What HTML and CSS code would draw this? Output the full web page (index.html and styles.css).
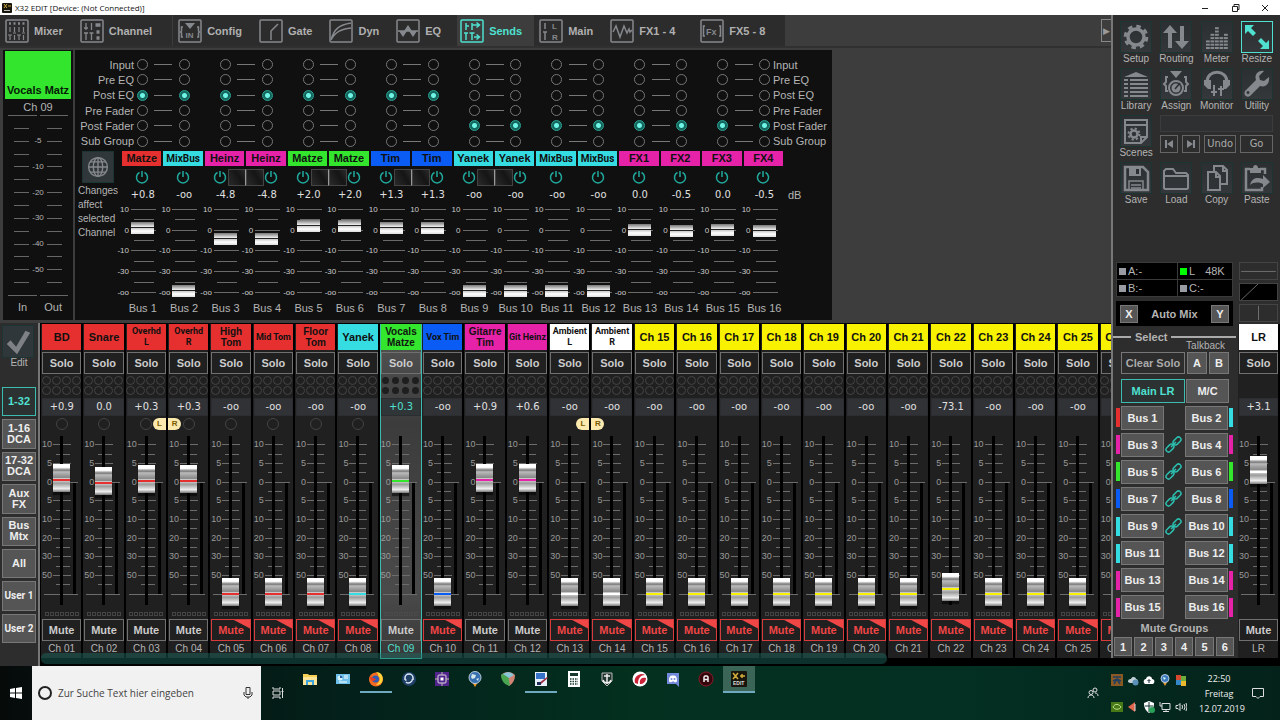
FILE: index.html
```html
<!DOCTYPE html>
<html lang="de">
<head>
  <meta charset="UTF-8">
  <meta name="viewport" content="width=device-width, initial-scale=1.0">
  <title>X32 EDIT</title>
  <link rel="stylesheet" href="styles.css">
</head>
<body>

  <header class="titlebar">
    <svg class="app-icon" viewBox="0 0 10 10"><rect width="10" height="10" rx="1" fill="#17150c"/><path d="M2 1l3 4M5 1L2 5M6 3h3" stroke="#c9a640"/><path d="M2 7.500h6" stroke="#bbb"/></svg>
    <span class="title">X32 EDIT [Device: (Not Connected)]</span>
    <button class="win-btn" aria-label="Minimize"><svg viewBox="0 0 10 10"><path d="M2 5.500h6"/></svg></button>
    <button class="win-btn" aria-label="Restore"><svg viewBox="0 0 10 10"><path d="M2.500 3.500h5v5h-5zM4 3.500v-2h5v5H7.500"/></svg></button>
    <button class="win-btn" aria-label="Close"><svg viewBox="0 0 10 10"><path d="M2 2l6 6M8 2l-6 6"/></svg></button>
  </header>

  <div class="app">
    <main class="main">
      <nav class="tabs" id="tabs"></nav>

      <section class="editor">
        <div class="channel-meter">
          <div class="channel-name">Vocals Matz</div>
          <div class="channel-id">Ch 09</div>
          <div class="meter-line"><i></i><i></i></div>
          <div class="meter-scale" id="meterScale"></div>
          <div class="meter-line"><i></i><i></i></div>
          <div class="meter-foot"><span>In</span><span>Out</span></div>
        </div>

        <div class="sends">
          <div class="routing">
            <div class="route-labels route-left">
              <span>Input</span><span>Pre EQ</span><span>Post EQ</span><span>Pre Fader</span><span>Post Fader</span><span>Sub Group</span>
            </div>
            <div class="route-pairs" id="routePairs"></div>
            <div class="route-labels route-right">
              <span>Input</span><span>Pre EQ</span><span>Post EQ</span><span>Pre Fader</span><span>Post Fader</span><span>Sub Group</span>
            </div>
          </div>
          <div class="send-levels">
            <div class="globe-col">
              <button class="tile" aria-label="Global"><svg viewBox="0 0 32 32" class="line-icon"><circle cx="16" cy="16" r="10"/><ellipse cx="16" cy="16" rx="5" ry="10"/><path d="M16 6v20M6 16h20M8 10.500h16M8 21.500h16"/></svg></button>
              <p>Changes<br>affect<br>selected<br>Channel</p>
            </div>
            <div class="buses" id="buses"></div>
            <div class="unit">dB</div>
          </div>
        </div>
      </section>

      <section class="mixer">
        <aside class="layers">
          <button class="tile" aria-label="Edit layer"><svg viewBox="0 0 32 32"><path d="M4 18l4-4 6 7L24 4l5 2-14 23z" fill="#7e8185"/></svg></button>
          <span class="edit-label">Edit</span>
          <div class="layer-list">
            <button class="active">1-32</button>
            <button>1-16<br>DCA</button>
            <button>17-32<br>DCA</button>
            <button>Aux<br>FX</button>
            <button>Bus<br>Mtx</button>
            <button>All</button>
            <button class="narrow">User 1</button>
            <button class="narrow">User 2</button>
          </div>
        </aside>
        <div class="strips-view">
          <div class="strips" id="strips"></div>
          <div class="scroll-thumb"></div>
        </div>
      </section>
    </main>

    <aside class="panel">
      <div class="tools" id="tools"></div>
      <div class="lower">
        <div class="select">
          <div class="status">
            <span><i></i>A:-</span><span><i class="on"></i>L <b>48K</b></span>
            <span><i></i>B:-</span><span><i></i>C:-</span>
          </div>
          <div class="automix"><button class="btn">X</button><span>Auto Mix</span><button class="btn">Y</button></div>
          <h2 class="select-title">Select</h2>
          <div class="talkback">Talkback</div>
          <div class="row solo-row"><button class="btn clear">Clear Solo</button><button class="btn">A</button><button class="btn">B</button></div>
          <div class="row main-row"><button class="btn main-lr">Main LR</button><button class="btn">M/C</button></div>
          <div class="bus-select" id="busSelect"></div>
          <div class="groups-title">Mute Groups</div>
          <div class="groups"><button class="btn">1</button><button class="btn">2</button><button class="btn">3</button><button class="btn">4</button><button class="btn">5</button><button class="btn">6</button></div>
        </div>
        <div class="master">
          <svg class="mini" viewBox="0 0 39 18"><path d="M0 9.500h39"/></svg>
          <svg class="mini mini-dark" viewBox="0 0 39 18"><path d="M0 18L19 0"/></svg>
          <svg class="mini" viewBox="0 0 39 18"><path d="M19.500 1v16"/></svg>
          <div id="masterStrip" class="master-strip"></div>
        </div>
      </div>
    </aside>
  </div>

  <footer class="taskbar">
    <button class="start" aria-label="Start"><svg viewBox="0 0 12 12"><path d="M0 2l5-1v4.500H0zM6 1l6-1v5.500H6zM0 6.500h5V11l-5-1zM6 6.500h6V12l-6-1z" fill="#fff"/></svg></button>
    <label class="search">
      <svg viewBox="0 0 16 16"><circle cx="8" cy="8" r="6" fill="none" stroke="#222" stroke-width="2"/></svg>
      <input type="text" placeholder="Zur Suche Text hier eingeben" aria-label="Suche">
      <svg viewBox="0 0 16 16" class="mic"><path d="M6 2.500h4v7H6zM4 7v3l2 2h4l2-2V7M8 12v2"/></svg>
    </label>
    <button class="taskview" aria-label="Taskansicht"><svg viewBox="0 0 12 12"><path d="M1 0v2h7V0M1 12v-2h7v2M1 4h7v4H1zM10.500 1v10M9.500 4.500h2"/></svg></button>
    <div class="apps" id="apps"></div>
    <div class="tray">
      <svg class="people" viewBox="0 0 12 12"><circle cx="8" cy="3" r="2"/><circle cx="4" cy="5.500" r="2"/><path d="M1 11c0-4 6-4 6 0M8 6c2 0 3 1 3 3"/></svg>
      <div class="tray-icons" id="tray"></div>
      <div class="clock">22:50<br>Freitag<br>12.07.2019</div>
      <svg class="note" viewBox="0 0 14 14"><path d="M1.500 2.500h11v8H9l-2 2-2-2H1.500z"/></svg>
    </div>
  </footer>

  <script src="script.js"></script>
</body>
</html>
```
FILE: styles.css
```css
* {
  box-sizing: border-box;
}

body {
  margin: 0;
  min-height: 100vh;
  display: flex;
  flex-direction: column;
  overflow: hidden;
  background: #000;
  color: #b4b4b4;
  font-family: "Liberation Sans", Arial, sans-serif;
  font-size: 11px;
  line-height: 14px;
}

button {
  font: inherit;
  color: inherit;
  background: none;
  border: 0;
  padding: 0;
  cursor: pointer;
}

svg {
  display: block;
  flex: none;
}

/* Window title */
.titlebar {
  display: flex;
  align-items: center;
  height: 15px;
  padding-left: 2px;
  background: #fff;
  color: #111;
}

.app-icon {
  width: 10px;
  height: 10px;
}

.title {
  flex: 1;
  margin-left: 3px;
  font: 8px/12px "Open Sans", sans-serif;
}

.win-btn {
  width: 30px;
  display: flex;
  justify-content: center;
}

.win-btn svg {
  width: 10px;
  height: 10px;
  fill: none;
  stroke: #222;
}

.app {
  flex: 1;
  display: flex;
  min-height: 0;
}

.main {
  flex: 1;
  min-width: 0;
  display: flex;
  flex-direction: column;
  background: #3d3d3d;
}

/* Tabs */
.tabs {
  display: flex;
  height: 33px;
  border-bottom: 2px solid #303030;
}

.tab {
  display: flex;
  align-items: center;
  gap: 5px;
  padding: 0 12px 0 5px;
  background: #2c2c2c;
  color: #b0b0b0;
  font-weight: bold;
}

.tab-end {
  padding-right: 20px;
}

.tab-line {
  border-right: 1px solid #3c3c3c;
}

.tab-wide {
  padding-right: 16px;
}

.tab.active {
  padding-left: 3px;
  background: #3d3d3d;
  color: #4fe0d0;
}

.tab svg {
  width: 24px;
  height: 24px;
  fill: none;
  stroke: #85888c;
  stroke-width: 1.5;
}

.tab svg text {
  stroke: none;
  fill: #85888c;
  font-weight: bold;
}

.tab.active svg {
  stroke: #4fe0d0;
}

.tab-scroll {
  align-self: center;
  width: 10px;
  height: 23px;
  margin-left: auto;
  border: 1px solid #888;
  border-right: 0;
  color: #999;
  font-size: 9px;
}

/* Channel meter */
.editor {
  display: flex;
  gap: 2px;
  padding: 2px 3px 3px;
}

.channel-meter {
  width: 70px;
  height: 270px;
  padding: 1px 2px;
  background: #101010;
  display: flex;
  flex-direction: column;
}

.channel-name {
  height: 48px;
  display: flex;
  align-items: flex-end;
  justify-content: center;
  padding-bottom: 2px;
  background: #33e62d;
  color: #061a06;
  font-weight: bold;
  white-space: nowrap;
}

.channel-id {
  padding: 1px 0;
  text-align: center;
}

.meter-line {
  display: flex;
  gap: 3px;
  padding: 0 3px;
}

.meter-line i {
  flex: 1;
  height: 1px;
  background: #666;
}

.meter-scale {
  flex: 1;
  display: grid;
  grid-auto-rows: 1fr;
  padding: 6px 9px;
}

.meter-scale div {
  display: grid;
  grid-template-columns: 15px 1fr 15px;
  align-items: center;
  text-align: center;
  font-size: 8px;
  line-height: 8px;
}

.meter-scale i {
  height: 1px;
  background: #666;
}

.meter-foot {
  display: flex;
  justify-content: space-between;
  padding: 4px 9px 5px 13px;
}

/* Sends */
.sends {
  width: 757px;
  padding-top: 7px;
  background: #101010;
}

.routing {
  display: flex;
  height: 92px;
}

.route-labels {
  width: 59px;
  display: grid;
  align-items: center;
  white-space: nowrap;
}

.route-left {
  margin-right: -12px;
  text-align: right;
}

.route-right {
  margin-left: -12px;
}

.route-pairs {
  flex: 1;
  display: grid;
  grid-template-columns: repeat(8, 1fr);
}

.route-pair {
  display: flex;
  align-items: center;
  justify-content: space-between;
  padding: 0 15px;
}

.route-pair i {
  width: 18px;
  height: 1px;
  background: #777;
}

.route-pair input {
  appearance: none;
  width: 11px;
  height: 11px;
  margin: 0;
  border: 1px solid #777;
  border-radius: 50%;
}

.route-pair input:checked {
  border-color: #2aa396;
  background: radial-gradient(circle, #6ff5e6 0 2px, #14655c 3px);
}

.send-levels {
  display: flex;
  padding-top: 2px;
}

.tile {
  width: 32px;
  height: 32px;
  border: 1px solid #1c3533;
  background: linear-gradient(#2b2f31, #34383a);
}

.tile svg {
  width: 30px;
  height: 30px;
}

.globe-col .tile,
.layers .tile {
  background: #30373b;
}

.line-icon {
  fill: none;
  stroke: #85888c;
  stroke-width: 1.5;
}

.globe-col {
  width: 47px;
  padding-left: 3px;
  font-size: 10px;
}

.globe-col .tile {
  display: block;
  margin-left: 4px;
}

.globe-col p {
  margin: 1px 0 0;
  line-height: 14px;
}

.buses {
  flex: 1;
  display: grid;
  grid-template-columns: repeat(16, 1fr);
}

.unit {
  width: 47px;
  padding: 37px 0 0 3px;
}

.bus-name {
  height: 15px;
  margin-right: 2px;
  text-align: center;
  line-height: 15px;
  font-weight: bold;
  color: #111;
  overflow: hidden;
}

.narrow {
  font-family: "Liberation Sans Narrow", Roboto, sans-serif;
}

.bus-name.narrow {
  font-size: 10px;
}

.bus-power {
  display: flex;
  justify-content: center;
  align-items: center;
  gap: 1px;
  height: 22px;
  padding-right: 2px;
}

.bus-power button svg {
  width: 14px;
  height: 14px;
  fill: none;
  stroke: #20a99c;
  stroke-width: 1.5;
}

.bus-power.first {
  justify-content: flex-end;
  padding-right: 0;
}

.bus-power.second {
  flex-direction: row-reverse;
  justify-content: flex-end;
  gap: 0;
  padding-right: 0;
}

.pan {
  width: 18px;
  height: 17px;
  border: 1px solid #444;
  background: linear-gradient(60deg, #2a2a2a, #151515 60%, #2a2a2a);
}

.first .pan {
  border-right-color: #999;
}

.value {
  font-family: "DejaVu Sans Condensed", "DejaVu Sans", sans-serif;
  text-align: center;
  color: #e0e0e0;
}

.send-scale {
  position: relative;
  height: 94px;
  margin-top: 2px;
  display: grid;
  grid-template-rows: repeat(9, minmax(0, 1fr));
}

.send-scale > div {
  display: flex;
  align-items: center;
}

.send-scale span {
  width: 7px;
  display: flex;
  justify-content: flex-end;
  font-size: 8px;
  line-height: 9px;
  white-space: nowrap;
  color: #ccc;
}

.send-scale i {
  width: 20px;
  height: 1px;
  margin-left: 12px;
  background: #6a6a6a;
}

.send-scale span:empty + i {
  margin-left: 5px;
}

.send-scale .major i {
  width: 25px;
  margin-left: 2px;
}

.send-cap {
  position: absolute;
  left: 9px;
  width: 23px;
  height: 12px;
  transform: translateY(-50%);
  background: linear-gradient(#777, #eee 40%, #222 42%, #222 50%, #ccc 52%, #fff 75%, #ddd);
}

.bus-label {
  padding-top: 3px;
  text-align: center;
  white-space: nowrap;
}

/* Mixer */
.mixer {
  flex: 1;
  display: flex;
  min-height: 0;
}

.layers {
  width: 40px;
  display: flex;
  flex-direction: column;
  align-items: flex-start;
  padding: 2px 3px 23px 2px;
  border-right: 2px solid #777;
  background: #2d2d2d;
}

.layers .tile {
  height: 33px;
}

.edit-label {
  width: 34px;
  font-size: 10px;
  line-height: 10px;
  text-align: center;
}

.layer-list {
  flex: 1;
  width: 34px;
  display: flex;
  flex-direction: column;
  gap: 3px;
  margin-top: 19px;
}

.layer-list button,
.btn {
  border: 1px solid #777;
  background: #555;
  color: #eee;
  font-weight: bold;
}

.layer-list button {
  flex: 1;
  line-height: 11px;
}

.layer-list .narrow {
  font-size: 10px;
}

.layer-list .active {
  background: #2c3131;
  border-color: #3bbcae;
  color: #4fe0d0;
}

.strips-view {
  position: relative;
  flex: 1;
  min-width: 0;
  padding: 1px 0 8px 1px;
  overflow: hidden;
  background: #000;
}

.strips {
  width: calc(100% + 31px);
  height: 100%;
  display: grid;
  grid-template-columns: repeat(26, 1fr);
}

.scroll-thumb {
  position: absolute;
  left: 1px;
  bottom: 2px;
  width: 79%;
  height: 11px;
  border-radius: 5px;
  background: rgba(28, 110, 102, .45);
}

.strip {
  min-width: 0;
  display: flex;
  flex-direction: column;
  padding-left: 1px;
  border-right: 2px solid #000;
  background: #202020;
}

.strip.selected {
  margin-bottom: -1px;
  padding: 0;
  border: 1px solid #3bbcae;
  border-top: 0;
  background: linear-gradient(#555, #3c3c3c 30%, #4a4a4a 80%, #383838);
}

.strip-name {
  height: 26px;
  display: flex;
  align-items: center;
  justify-content: center;
  text-align: center;
  color: #111;
  font-weight: bold;
  line-height: 11px;
  white-space: nowrap;
}

.strip-name.two {
  font-size: 10px;
}

.strip-name.narrow {
  font-size: 9px;
}

.box-btn {
  height: 22px;
  border: 1px solid #707070;
  color: #ccc;
  font-weight: bold;
}

.solo {
  margin-top: 2px;
}

.strip .dots {
  height: 24px;
  display: grid;
  grid-template-columns: repeat(4, 10px);
  grid-auto-rows: 10px;
  align-content: center;
  justify-content: center;
}

.dots i {
  width: 9px;
  height: 9px;
  border: 1px solid #444;
  border-radius: 50%;
}

.selected .dots i {
  width: 7px;
  height: 7px;
  margin: 1px;
  border: 0;
  background: #1e1e1e;
}

.strip .value {
  height: 18px;
  margin-bottom: 2px;
  line-height: 16px;
  border: 1px solid #2b2d30;
  background: #303236;
}

.strip.selected .value {
  color: #4fe0d0;
  background: #303638;
}

.pan-row {
  position: relative;
  height: 13px;
  display: flex;
  justify-content: center;
}

.knob {
  width: 12px;
  height: 12px;
  border: 1px solid #444;
  border-radius: 50%;
}

.link {
  position: absolute;
  top: 0;
  width: 13px;
  height: 12px;
  background: #fbe9ae;
  color: #7a5a00;
  font-size: 8px;
  line-height: 12px;
  font-weight: bold;
  text-align: center;
}

.link-l {
  right: 0;
  border-radius: 6px 0 0 6px;
}

.link-r {
  left: -1px;
  border-radius: 0 6px 6px 0;
}

.fader {
  flex: 1;
  position: relative;
  display: grid;
  grid-template-rows: repeat(17, minmax(0, 1fr));
  margin: 9px 0 13px 1px;
}

.tick {
  display: flex;
  align-items: center;
}

.tick span {
  width: 9px;
  display: flex;
  justify-content: flex-end;
  color: #999;
  font-size: 9px;
  line-height: 9px;
}

.tick i {
  width: 14px;
  height: 1px;
  margin-left: 13px;
  background: #6c6c6c;
}

.tick.major i {
  width: 18px;
  margin-left: 1px;
}

.tick.zero i {
  width: 25px;
}

.tick.end i {
  width: 34px;
  margin-left: 1px;
}

.groove,
.meter {
  position: absolute;
  background: #000;
}

.groove {
  left: 17px;
  top: -4px;
  bottom: -6px;
  width: 3px;
}

.meter {
  left: 30px;
  top: 27%;
  bottom: 3%;
  width: 3px;
}

.cap {
  position: absolute;
  left: 10px;
  width: 17px;
  height: 28px;
  margin-top: -16px;
  background: linear-gradient(#fff 0 12%, #aaa 18%, #777 22%, #bbb 28%, #888 48%, #ccc 52%, #bbb 64%, #999 68%, #eee 88%, #777);
  box-shadow: 0 3px 1px #0008;
}

.cap::after {
  content: "";
  position: absolute;
  left: 0;
  right: 0;
  top: 15px;
  height: 2px;
  background: currentColor;
}

.squares {
  height: 5px;
  display: flex;
  justify-content: center;
  gap: 1px;
  margin-bottom: 2px;
}

.squares i {
  width: 4px;
  height: 4px;
  border: 1px solid #444;
}

.selected .squares i {
  border-color: #4a4a4a;
}

.mute.on {
  border-color: #d83b3b;
  color: #f04646;
  background: linear-gradient(to bottom left, #f04646 7px, transparent 8px);
}

.strip-label {
  height: 17px;
  font-size: 10px;
  line-height: 16px;
  text-align: center;
  white-space: nowrap;
}

.selected .strip-label {
  color: #4fe0d0;
}

/* Right panel */
.panel {
  width: 169px;
  display: flex;
  flex-direction: column;
  margin-bottom: 8px;
  border-left: 2px solid #777;
  background: #2d2d2d;
}

.tools {
  display: grid;
  grid-template-columns: repeat(4, 1fr);
  grid-auto-rows: 47px;
  height: 247px;
  padding: 6px 3px 0 3px;
  align-content: start;
}

.tool {
  display: flex;
  flex-direction: column;
  align-items: center;
  color: #b4b4b4;
  font-size: 10px;
  line-height: 12px;
}

.tool.active .tile {
  border-color: #4fe0d0;
}

.scene-box {
  grid-column: span 3;
  display: grid;
  grid-template-columns: 18px 18px 1fr 33px;
  grid-template-rows: 17px 18px;
  gap: 3px 4px;
  padding: 0 4px;
}

.scene-box input {
  grid-column: 1 / -1;
  width: 100%;
  min-width: 0;
  border: 1px solid #3c3c3c;
  background: #2f3031;
}

.scene-box button {
  border: 1px solid #666;
  color: #aaa;
  font-family: "DejaVu Sans Condensed", "DejaVu Sans", sans-serif;
  display: flex;
  align-items: center;
  justify-content: center;
}

.scene-box svg {
  width: 10px;
  height: 10px;
  fill: #85888c;
}

.lower {
  flex: 1;
  display: flex;
}

.select {
  flex: 1;
  display: flex;
  flex-direction: column;
  padding: 0 5px 1px 3px;
}

.status {
  display: grid;
  grid-template-columns: 60px 1fr;
  gap: 1px;
  height: 35px;
  border: 1px solid #3a3a3a;
  background: #3a3a3a;
}

.status span {
  display: flex;
  align-items: center;
  gap: 2px;
  padding-left: 2px;
  background: #000;
}

.status i {
  width: 7px;
  height: 7px;
  background: #999ca3;
}

.status i.on {
  background: #0f0;
}

.status b {
  margin-left: 8px;
  font-weight: normal;
}

.automix {
  display: flex;
  align-items: center;
  justify-content: space-between;
  height: 25px;
  margin-top: 4px;
  padding: 0 4px;
  background: #000;
  font-weight: bold;
}

.automix .btn {
  width: 18px;
  height: 18px;
}

.select-title {
  display: flex;
  align-items: center;
  gap: 4px;
  margin: 4px -3px 0;
  font-size: 11px;
  line-height: 14px;
}

.select-title::before,
.select-title::after {
  content: "";
  height: 2px;
  background: #aaa;
}

.select-title::before {
  width: 18px;
}

.select-title::after {
  flex: 1;
}

.talkback {
  margin: -4px 8px 0 0;
  text-align: right;
  font-size: 10px;
  line-height: 12px;
}

.row {
  display: grid;
  padding: 0 4px 0 5px;
}

.row .btn {
  padding: 0;
  white-space: nowrap;
}

.solo-row {
  grid-template-columns: 1fr 20px 20px;
  gap: 2px;
  height: 22px;
}

.main-row {
  grid-template-columns: 1fr 43px;
  gap: 1px;
  height: 24px;
  margin-top: 5px;
}

.btn.clear {
  background: #2d2d2d;
  color: #aaa;
}

.btn.main-lr {
  border-color: #3bbcae;
  background: #2c3131;
  color: #4fe0d0;
}

.bus-select {
  flex: 1;
  display: grid;
  grid-auto-rows: 1fr;
  margin-top: 1px;
}

.bus-row {
  display: grid;
  grid-template-columns: 4px 43px 1fr 43px 4px;
  align-items: center;
  column-gap: 1px;
}

.bus-row > i {
  height: 19px;
}

.bus-row .btn {
  height: 24px;
  padding: 0;
  white-space: nowrap;
}

.bus-row svg {
  width: 17px;
  height: 17px;
  fill: none;
  stroke: #2bbdae;
  stroke-width: 1.5;
}

.groups-title {
  text-align: center;
  font-weight: bold;
  line-height: 14px;
}

.groups {
  display: grid;
  grid-template-columns: repeat(6, 1fr);
  gap: 2px;
  margin: 2px -1px 1px -2px;
}

.groups .btn {
  height: 19px;
}

.master {
  width: 42px;
  display: flex;
  flex-direction: column;
}

.mini {
  width: 39px;
  height: 18px;
  margin: 0 0 3px 1px;
  border: 1px solid #444;
  stroke: #777;
}

.mini:nth-of-type(3) {
  margin-bottom: 2px;
}

.mini-dark {
  background: #000;
}

.master-strip {
  flex: 1;
  display: grid;
}

/* Taskbar */
.taskbar {
  display: flex;
  height: 54px;
  background: linear-gradient(90deg, #060b0a, #03211a 28%, #03301f 50%, #033022 75%, #04221a);
  color: #eee;
}

.start {
  width: 32px;
  display: flex;
  align-items: center;
  justify-content: center;
}

.start svg {
  width: 12px;
  height: 12px;
}

.search {
  width: 229px;
  display: flex;
  align-items: center;
  padding: 0 5px;
  background: #f1f1f1;
}

.search svg {
  width: 16px;
  height: 16px;
}

.search .mic {
  fill: none;
  stroke: #333;
}

.search input {
  flex: 1;
  min-width: 0;
  border: 0;
  padding: 0 5px;
  background: none;
  font: 10px/14px "Open Sans", sans-serif;
}

.search input::placeholder {
  color: #444;
}

.taskview {
  width: 33px;
  display: flex;
  align-items: center;
  justify-content: center;
}

.taskview svg,
.people,
.note {
  width: 12px;
  height: 12px;
  fill: none;
  stroke: #ddd;
}

.apps {
  display: flex;
  gap: 1px;
}

.app-btn {
  width: 32px;
  height: 27px;
  display: flex;
  align-items: center;
  justify-content: center;
  border-bottom: 2px solid transparent;
}

.app-btn svg {
  width: 16px;
  height: 16px;
}

.app-btn.running {
  border-color: #6fa9c0;
}

.app-btn.current {
  background: #3b6557;
}

.tray {
  margin-left: auto;
  display: flex;
  align-items: center;
  gap: 12px;
  padding-right: 15px;
}

.tray-icons {
  display: grid;
  grid-template-columns: repeat(5, 12px);
  gap: 15px 4px;
}

.tray-icons svg {
  width: 12px;
  height: 12px;
}

.clock {
  width: 40px;
  display: flex;
  flex-direction: column;
  text-align: center;
  font: 9px/15px "Open Sans", sans-serif;
}

.note {
  width: 14px;
  height: 14px;
}
```
FILE: script.js
```js
const RED = '#e5302f', CYAN = '#35dce2', PINK = '#e622a8', GREEN = '#33e62d', BLUE = '#0a5cf5', WHITE = '#ffffff', YELLOW = '#f8f200';

const fill = (id, html) => { document.getElementById(id).innerHTML = html; };
const frame = '<rect x="1" y="1" width="22" height="22" rx="1"/>';

// tabs: label, icon, extra classes
const tabs = [
  ['Mixer', '<path d="M5 8v5M9.500 8v5M14 8v5M18.500 8v5M5 16v5M9.500 16v5M14 16v5M18.500 16v5M3 16h4M8 14h3M12 16h4M17 14h3" stroke-width="1.200"/><path d="M4 4.500h2M8.500 4.500h2M13 4.500h2M17.500 4.500h2" stroke-width="2.500"/>', ''],
  ['Channel', '<path d="M6 4v7M11.500 4v7M4 14h4M6 14v7M9.500 14h4M11.500 14v7M4 9h4" stroke-width="1.300"/><path d="M15.500 6h5M16.500 13h3M16.500 19h3" stroke-width="3.500"/>', 'tab-end tab-line'],
  ['Config', '<path d="M7 4h10l-5 6z" fill="#85888c" stroke="none"/><path d="M5 8H3.500v4l-1 1 1 1v4H5M19 8h1.500v4l1 1-1 1v4H19"/><text x="7.500" y="19" font-size="8">IN</text>', ''],
  ['Gate', '<path d="M12 21v-9l7-7"/>', ''],
  ['Dyn', '<path d="M2 21C5 10 10 6 22 4M2 21C6 13 12 10 22 9"/>', ''],
  ['EQ', '<path d="M2 12h20"/><path d="M3 12h5l4-6 4 6h5l-4 6-4-6h-2l-4 6z" fill="#85888c" stroke="none"/>', 'tab-wide'],
  ['Sends', '<path d="M6 4v7M6 7h3M12 4v7M12 6h7M16.500 3.500L19.500 6l-3 2.500M4 14h4M6 14v7M9.500 14h5M12 14v7M14 18h5M16.500 15.500l3 2.500-3 2.500"/>', 'active'],
  ['Main', '<path d="M6 4v6M4 13h4M6 13v8"/><text x="13" y="10" font-size="8">L</text><text x="13" y="21" font-size="8">R</text>', ''],
  ['FX1 - 4', '<path d="M3 13l3-6 4 11 4-11 3 7 2-4 1 3 2-2"/>', 'tab-end'],
  ['FX5 - 8', '<path d="M5 7H3.500v10H5M19 7h1.500v10H19"/><text x="6" y="15.500" font-size="9">Fx</text>', 'tab-end']
];
fill('tabs', tabs.map(([name, icon, cls]) =>
  `<button class="tab ${cls}"><svg viewBox="0 0 24 24">${frame}${icon}</svg>${name}</button>`).join('') +
  '<button class="tab-scroll" aria-label="Scroll tabs">&#9654;</button>');

// input meter scale
fill('meterScale', ['', '-5', '', '-10', '', '-20', '', '-30', '', '-40', '', '-50', '']
  .map(v => `<div><i></i><span>${v}</span><i></i></div>`).join(''));

// send buses: name, colour, value, fader position in %
const buses = [
  ['Matze', RED, '+0.8', 26], ['MixBus', CYAN, '-oo', 93], ['Heinz', PINK, '-4.8', 37], ['Heinz', PINK, '-4.8', 37],
  ['Matze', GREEN, '+2.0', 23], ['Matze', GREEN, '+2.0', 23], ['Tim', BLUE, '+1.3', 25], ['Tim', BLUE, '+1.3', 25],
  ['Yanek', CYAN, '-oo', 93], ['Yanek', CYAN, '-oo', 93], ['MixBus', CYAN, '-oo', 93], ['MixBus', CYAN, '-oo', 93],
  ['FX1', PINK, '0.0', 28], ['FX2', PINK, '-0.5', 29], ['FX3', PINK, '0.0', 28], ['FX4', PINK, '-0.5', 29]
];
const taps = ['Input', 'Pre EQ', 'Post EQ', 'Pre Fader', 'Post Fader', 'Sub Group'];

fill('routePairs', taps.map((tap, r) => [0, 2, 4, 6, 8, 10, 12, 14].map(b => {
  const radio = n => `<input type="radio" name="bus${n + 1}" aria-label="Bus ${n + 1} ${tap}"${r === (n < 8 ? 2 : 4) ? ' checked' : ''}>`;
  return `<div class="route-pair">${radio(b)}<i></i>${radio(b + 1)}</div>`;
}).join('')).join(''));

const sendScale = ['10', '', '0', '', '-10', '', '-30', '', '-oo']
  .map(v => `<div class="${v ? 'major' : ''}"><span>${v}</span><i></i></div>`).join('');
const linkedBuses = [2, 3, 4, 5, 6, 7, 8, 9];

fill('buses', buses.map(([name, color, value, pos], i) => {
  const linked = linkedBuses.includes(i);
  const side = linked ? (i % 2 ? 'second' : 'first') : '';
  return `<div class="bus">
    <div class="bus-name ${name === 'MixBus' ? 'narrow' : ''}" style="background:${color}">${name}</div>
    <div class="bus-power ${side}">
      <button aria-label="Bus ${i + 1} on"><svg viewBox="0 0 14 14"><path d="M4.500 2.500a5.500 5.500 0 1 0 5 0M7 1v6"/></svg></button>
      ${linked ? '<div class="pan"></div>' : ''}
    </div>
    <div class="value">${value}</div>
    <div class="send-scale">${sendScale}<div class="send-cap" style="top:${pos}%"></div></div>
    <div class="bus-label">Bus ${i + 1}</div>
  </div>`;
}).join(''));

// channel strips: name, colour, value, fader position in %, muted, link badge
const channels = [
  ['BD', RED, '+0.9', 25], ['Snare', RED, '0.0', 27], ['Overhd<br>L', RED, '+0.3', 26, 0, 'L'], ['Overhd<br>R', RED, '+0.3', 26, 0, 'R'],
  ['High<br>Tom', RED, '-oo', 97, 1], ['Mid Tom', RED, '-oo', 97, 1], ['Floor<br>Tom', RED, '-oo', 97, 1], ['Yanek', CYAN, '-oo', 97, 1],
  ['Vocals<br>Matze', GREEN, '+0.3', 26], ['Vox Tim', BLUE, '-oo', 97, 1], ['Gitarre<br>Tim', PINK, '+0.9', 25], ['Git Heinz', PINK, '+0.6', 25],
  ['Ambient<br>L', WHITE, '-oo', 97, 1, 'L'], ['Ambient<br>R', WHITE, '-oo', 97, 1, 'R']
];
for (let n = 15; n <= 26; n++) {
  channels.push(['Ch ' + n, YELLOW, n === 22 ? '-73.1' : '-oo', n === 22 ? 94 : 97, 1]);
}
const narrowNames = ['Mid Tom', 'Vox Tim', 'Git Heinz', 'Ambient<br>L', 'Ambient<br>R', 'Overhd<br>L', 'Overhd<br>R'];
const faderScale = ['10', '', '5', '', '0', '', '5', '', '10', '', '20', '', '30', '', '50', '', 'end'].map((v, i) => {
  const cls = v === 'end' ? 'end' : (v ? 'major' : '') + (i === 4 ? ' zero' : '');
  return `<div class="tick ${cls}">${v && v !== 'end' ? `<span>${v}</span>` : ''}<i></i></div>`;
}).join('');

function strip(ch, label, i, master) {
  const [name, color, value, pos, muted, link] = ch;
  const cls = (name.includes('<br>') ? 'two ' : '') + (narrowNames.includes(name) ? 'narrow' : '');
  return `<div class="strip ${i === 8 ? 'selected' : ''}">
    <div class="strip-name ${cls}" style="background:${color}"><span>${name}</span></div>
    <button class="box-btn solo">Solo</button>
    <div class="dots">${master ? '' : '<i></i>'.repeat(8)}</div>
    <div class="value">${value}</div>
    <div class="pan-row">${i < 8 ? '<div class="knob"></div>' : ''}${link ? `<span class="link link-${link.toLowerCase()}">${link}</span>` : ''}</div>
    <div class="fader">${faderScale}<div class="groove"></div><div class="meter"></div><div class="cap" style="top:${pos}%;color:${color}"></div></div>
    <div class="squares">${master ? '' : '<i></i>'.repeat(7)}</div>
    <button class="box-btn mute ${muted ? 'on' : ''}">Mute</button>
    <div class="strip-label">${label}</div>
  </div>`;
}
fill('strips', channels.map((ch, i) => strip(ch, 'Ch ' + String(i + 1).padStart(2, '0'), i)).join(''));
fill('masterStrip', strip(['LR', WHITE, '+3.1', 20], 'LR', 99, true));

// toolbox
const G = '#85888c';
const bars = [[5, 2], [9.5, 4], [14, 6], [18.5, 3], [23, 4]]
  .map(([x, n]) => Array.from({ length: n + 1 }, (_, k) => `<rect x="${x}" y="${26 - k * 3.3}" width="3.800" height="2"/>`).join('')).join('');
const tools = [
  ['Setup', `<circle cx="16" cy="16" r="8" fill="none" stroke="${G}" stroke-width="3.500"/><circle cx="16" cy="16" r="10.800" fill="none" stroke="${G}" stroke-width="3" stroke-dasharray="4.500 3.980"/>`],
  ['Routing', '<path d="M10 4l7 8h-5v15H8V12H3zM22 28l-7-8h5V5h4v15h5z"/>'],
  ['Meter', bars],
  ['Resize', '<path d="M4 4h9l-3 3 5 5-3 3-5-5-3 3zM28 28h-9l3-3-5-5 3-3 5 5 3-3z" fill="#4fe0d0"/>'],
  ['Library', '<path d="M16 4l12 5H4zM4 11h4v2H4zM10 11h18v2H10zM4 15h4v2H4zM10 15h18v2H10zM4 19h4v2H4zM10 19h18v2H10zM4 23h4v2H4zM10 23h18v2H10zM4 27h4v2H4zM10 27h18v2H10z"/>'],
  ['Assign', `<path d="M10 3h12l-6 7z"/><g fill="none" stroke="${G}" stroke-width="2"><path d="M8 9H6v5l-2 2 2 2v5h2M24 9h2v5l2 2-2 2v5h-2"/><circle cx="16" cy="20" r="7"/></g><circle cx="16" cy="20" r="4.500"/><path d="M15 21l5-6" stroke="#2b2f31" stroke-width="1.500"/>`],
  ['Monitor', `<path d="M6 14C6 1 26 1 26 14" fill="none" stroke="${G}" stroke-width="3"/><path d="M3 12h7v9H7l-4-4zM22 12h7v5l-4 4h-3z"/><path d="M13 17v6M13 25v3M10 24h6M20 18v2M20 22v6M17 21h6" stroke="${G}" stroke-width="2"/>`],
  ['Utility', '<path d="M28 9l-5 4-4-1-1-4 5-5c-6-1-10 4-8 9L4 23c-2 4 2 7 5 5l10-10c6 2 10-3 9-9zM7 26a1.500 1.500 0 1 1 0-3 1.500 1.500 0 0 1 0 3z" fill-rule="evenodd"/>'],
  ['Scenes', `<g fill="none" stroke="${G}" stroke-width="2"><path d="M5 5h22v17l-6 6H5zM5 10h22M21 28v-6h6"/><circle cx="14" cy="19" r="3.500" stroke-width="2.500"/></g><circle cx="14" cy="19" r="5.500" fill="none" stroke="${G}" stroke-width="2" stroke-dasharray="2.200 2.120"/>`],
  null,
  ['Save', `<path d="M5 5h18l5 5v18H5z" fill="none" stroke="${G}" stroke-width="2.500"/><path d="M9 5h12v9H9z"/><path d="M16 7h3v5h-3z" fill="#2b2f31"/><path d="M9 28V19h14v9M11 23h10M11 26h10" fill="none" stroke="${G}" stroke-width="1.500"/>`],
  ['Load', `<path d="M4 26V9l2-2h7l3 4h10l2 2v13l-1 1H5zM4 14h24" fill="none" stroke="${G}" stroke-width="2"/>`],
  ['Copy', `<g stroke="${G}" stroke-width="2" fill="#2f3335"><path d="M13 4h9l4 4v14H13zM22 4v5h4"/><path d="M7 10h8l4 4v14H7zM15 10v5h4"/></g>`],
  ['Paste', `<path d="M9 7H5v21h16v-3M19 7h5v5" fill="none" stroke="${G}" stroke-width="2.500"/><path d="M9 6h3c0-4 5-4 5 0h3v5H9zM9 23c2-8 8-8 13-6v-4l7 7-7 6v-4c-5-2-9-2-13 1z"/>`]
];
fill('tools', tools.map(t => t ? `<button class="tool ${t[0] === 'Resize' ? 'active' : ''}"><span class="tile"><svg viewBox="1 1 30 30" fill="${G}">${t[1]}</svg></span>${t[0]}</button>` :
  `<div class="scene-box"><input type="text" aria-label="Scene">
    <button aria-label="Previous"><svg viewBox="0 0 10 10"><path d="M1 1h2v8H1zM9 1v8L3 5z"/></svg></button>
    <button aria-label="Next"><svg viewBox="0 0 10 10"><path d="M7 1h2v8H7zM1 1v8l6-4z"/></svg></button>
    <button>Undo</button><button>Go</button></div>`).join(''));

// bus select buttons
const selectColors = [[RED, CYAN], [PINK, PINK], [GREEN, GREEN], [BLUE, BLUE], [CYAN, CYAN], [CYAN, CYAN], [PINK, PINK], [PINK, PINK]];
fill('busSelect', selectColors.map(([left, right], r) => `<div class="bus-row">
  <i style="background:${left}"></i><button class="btn">Bus ${r * 2 + 1}</button>
  <span>${r > 0 && r < 5 ? '<svg viewBox="0 0 17 17"><g transform="rotate(-45 8.500 8.500)"><rect x="-1" y="6" width="9" height="5" rx="2.500"/><rect x="9" y="6" width="9" height="5" rx="2.500"/><path d="M5 8.500h7"/></g></svg>' : ''}</span>
  <button class="btn">Bus ${r * 2 + 2}</button><i style="background:${right}"></i></div>`).join(''));

// taskbar programs
const apps = [
  ['Explorer', '<path d="M1 3h5l1 1h8v10H1z" fill="#f6cf57"/><path d="M1 6h14v8H1z" fill="#fbe398"/><path d="M4 14v-5h8v5h-2v-3H6v3z" fill="#3da5dc"/>'],
  ['Systemsteuerung', '<rect x="1" y="3" width="14" height="10" fill="#6cc0ea"/><circle cx="5" cy="7" r="2.500" fill="#d8f1ff"/><path d="M5 7V4.500A2.500 2.500 0 0 1 7.500 7z" fill="#245fa0"/><path d="M9 5h4M9 7h4M4 11h8" stroke="#fff"/>'],
  ['Firefox', '<circle cx="8" cy="8.500" r="7" fill="#f36b21"/><path d="M8 1c6 0 8 6 6 10-2 3-5 3-6 3 4-3 5-7 2-9 1-2-1-3-2-4z" fill="#ffd43b"/><circle cx="7.500" cy="8" r="3.500" fill="#2d5bb5"/><path d="M1 6c3 0 4 1 7 2-2 3-4 2-5 1z" fill="#e33b2a"/>', 'running'],
  ['TeamSpeak', '<circle cx="8" cy="8" r="7" fill="#203f66"/><path d="M4 9V7a4 4 0 0 1 8 0v2M4 9h1.500M12 9h-1.500M5 11c2 2 4 1 6-1" fill="none" stroke="#dce9f5" stroke-width="1.500"/>'],
  ['CPU', '<rect x="1" y="1" width="14" height="14" fill="#51248b"/><rect x="4" y="4" width="8" height="8" rx="1" fill="none" stroke="#ddd"/><rect x="6.500" y="6.500" width="3" height="3" fill="#fff"/><path d="M8 1v3M8 12v3M1 8h3M12 8h3" stroke="#bba"/>'],
  ['Maps', '<path d="M2 6h12l-6 10z" fill="#f09a28"/><circle cx="8" cy="6.500" r="6" fill="#356faf" stroke="#bcd"/><path d="M5 3l4 1-1 3-3 1-1-2zM9 8l3-1-1 3z" fill="#d3e6ee"/>'],
  ['Shield', '<path d="M1 4c4-4 10-4 14 0 0 6-3 9-6 11z" fill="#d18473"/><path d="M1 4c3-2 5-2 7-1l2 12C5 14 1 10 1 4z" fill="#4aa552"/><path d="M3 3c5-3 8-2 11 1l-5 3z" fill="#8ac5d8"/>'],
  ['Paint', '<rect x="2" y="1" width="12" height="14" fill="#e8f0fa"/><path d="M3 2h9v6H3z" fill="#3774c9"/><path d="M6 12l8-6 1 1-7 6z" fill="#9e3042"/><path d="M4 11h4v3H4z" fill="#222d55"/>', 'running'],
  ['Rechner', '<path d="M2 0h12v16H2z" fill="#fff"/><path d="M4 2h8v3H4z" fill="#173a2c"/><path d="M4 8h8M4 10.500h8M4 13h8" stroke="#173a2c" stroke-width="1.500" stroke-dasharray="1.500 1"/>'],
  ['Warships', '<path d="M3 2h10v8l-5 5-5-5z" fill="#20352e" stroke="#bbb"/><path d="M8 3v10M5 5h6M4 9c1 4 7 4 8 0" fill="none" stroke="#eee" stroke-width="1.500"/>'],
  ['Swirl', '<circle cx="8" cy="8" r="7.500" fill="#fff"/><path d="M3 12C1 5 9 1 13 4 9 4 6 7 6 13zM8 13c-1-6 3-7 6-6 0 4-3 6-6 6z" fill="#cc2238"/>'],
  ['Discord', '<path d="M2 2h12v14l-3-3H2z" fill="#7289da"/><path d="M4 10.500c0-5 1-6 4-6s4 1 4 6l-2 1-1-1H7l-1 1z" fill="#fff"/><circle cx="6.500" cy="8" r="1" fill="#7289da"/><circle cx="9.500" cy="8" r="1" fill="#7289da"/>'],
  ['A', '<circle cx="8" cy="8" r="7" fill="#35070c" stroke="#8c1a2b"/><path d="M6 11V6l1-1h2l1 1v5M6 8.500h4" fill="none" stroke="#eee" stroke-width="1.500"/>'],
  ['X32 Edit', '<rect width="16" height="16" rx="1" fill="#17150c"/><path d="M2 2l5 6M7 2L2 8M9 5h5M11 3v4" stroke="#d1ad3e" stroke-width="1.500"/><text x="2" y="14" font-size="5" font-weight="bold" fill="#ddd">EDIT</text>', 'running current']
];
fill('apps', apps.map(([name, icon, cls]) => `<button class="app-btn ${cls || ''}" aria-label="${name}"><svg viewBox="0 0 16 16">${icon}</svg></button>`).join(''));

const tray = [
  '<rect width="12" height="12" fill="#8b5a24"/><path d="M2 3h8M3 10l3-5 3 5M2 7l4-2 4 2" stroke="#223f60" fill="none" stroke-width="1.500"/>',
  '<path d="M1 8c0-3 2-3 3-3 1-3 5-2 5 0 3 0 2 4 1 4H3z" fill="#c4d0d6"/><circle cx="8.500" cy="8.500" r="3" fill="#5b91b8"/>',
  '<path d="M1 9c-1-3 1-4 2-4 1-4 6-3 6 0 3 0 3 4 1 5H2z" fill="#fff"/><path d="M6 9V6M4.500 7L6 5.500 7.500 7" stroke="#123" fill="none"/>',
  '<path d="M2 5h8l-4 7z" fill="#e89a32"/><circle cx="6" cy="4.500" r="4" fill="#3a78c0" stroke="#bcd"/><path d="M4 3l3 1-2 2z" fill="#dfe"/>',
  '<path d="M1 1h5v5H1z" fill="#d6482f"/><path d="M6 2h5v5H6z" fill="#6fae3c"/><path d="M1 6h5v5H1z" fill="#3488c9"/><path d="M6 7h5v5H6z" fill="#e9b92e"/>',
  '<rect y="1" width="12" height="10" fill="#477a17"/><path d="M2 6c2-4 6-3 8 0-2 3-6 3-8 0z" fill="none" stroke="#bde08a"/>',
  '<path d="M1 6l7-5v10z" fill="#e2664d"/><path d="M8 3v7" stroke="#ddd"/>',
  '<path d="M1 2l5-2 5 2c0 5-2 8-5 10C3 10 1 7 1 2z" fill="#fff"/><path d="M6 1v10M2 5h8" stroke="#133"/><circle cx="9" cy="9" r="3" fill="#27a257"/>',
  '<path d="M3 2.500h8v6H3zM7 8.500v2M4 10.500h6M1 1v4h2" fill="none" stroke="#ddd"/>',
  '<path d="M1 4.500h2l2-2v7l-2-2H1zM7 4q1 2 0 4M9 3q2 3 0 6M11 2q2 4 0 8" fill="none" stroke="#ddd"/>'
];
fill('tray', tray.map(icon => `<svg viewBox="0 0 12 12">${icon}</svg>`).join(''));
```
